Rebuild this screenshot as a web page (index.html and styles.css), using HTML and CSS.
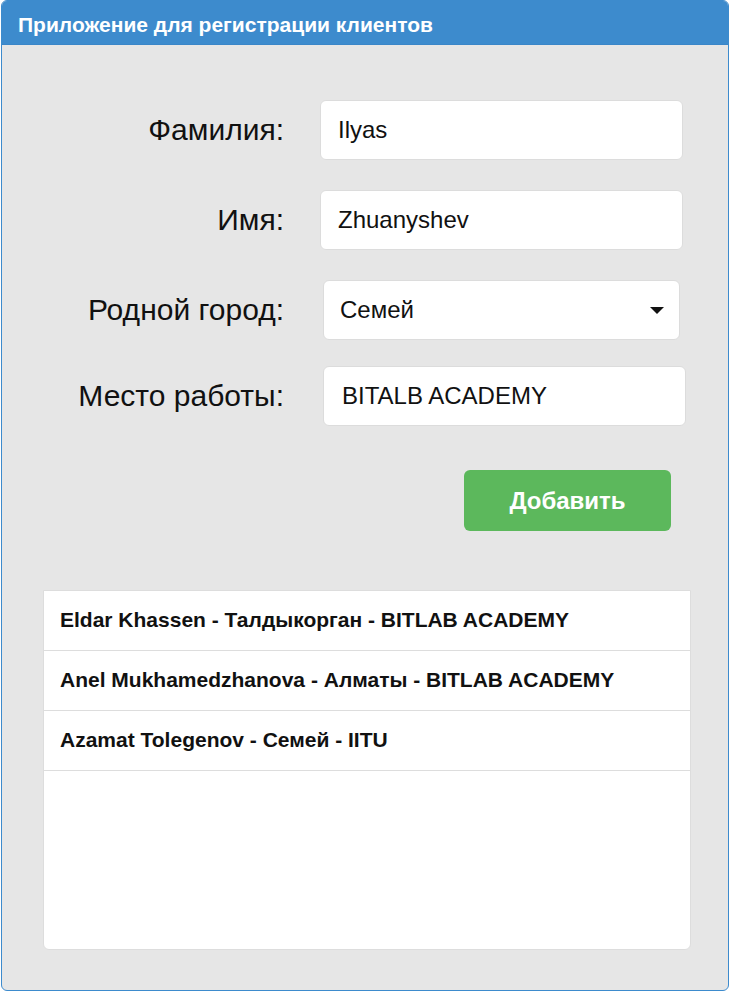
FILE: index.html
```html
<!DOCTYPE html>
<html lang="ru">
<head>
<meta charset="utf-8">
<title>Приложение для регистрации клиентов</title>
<link rel="stylesheet" href="styles.css">
</head>
<body>
<div class="panel">
  <div class="panel-head">Приложение для регистрации клиентов</div>
  <div class="panel-body">
    <form class="form">
      <div class="row row-1">
        <label class="label">Фамилия:</label>
        <div class="field field-a">Ilyas</div>
      </div>
      <div class="row row-2">
        <label class="label">Имя:</label>
        <div class="field field-a">Zhuanyshev</div>
      </div>
      <div class="row row-3">
        <label class="label">Родной город:</label>
        <div class="field field-select">Семей<span class="caret"></span></div>
      </div>
      <div class="row row-4">
        <label class="label">Место работы:</label>
        <div class="field field-b">BITALB ACADEMY</div>
      </div>
      <div class="actions">
        <button type="button" class="btn">Добавить</button>
      </div>
    </form>
    <ul class="list">
      <li class="item">Eldar Khassen - Талдыкорган - BITLAB ACADEMY</li>
      <li class="item">Anel Mukhamedzhanova - Алматы - BITLAB ACADEMY</li>
      <li class="item">Azamat Tolegenov - Семей - IITU</li>
    </ul>
  </div>
</div>
</body>
</html>
```
FILE: styles.css
```css
* { box-sizing: border-box; }
html, body { margin: 0; padding: 0; background: #fff; }
body { font-family: "Liberation Sans", Arial, sans-serif; color: #111; }

.panel {
  margin: 0 2px 0 1px;
  height: 991px;
  border: 1px solid #3d8bcd;
  border-radius: 6px;
  background: #e6e6e6;
  overflow: hidden;
  display: flex;
  flex-direction: column;
}
.panel-head {
  height: 44px;
  background: #3d8bcd;
  color: #fff;
  font-weight: bold;
  font-size: 21px;
  line-height: 24px;
  padding: 12px 0 0 16px;
  border-bottom: 1px solid #3a86c8;
}
.panel-body {
  padding: 0 38px 0 41px;
}
.form { padding-top: 55px; }
.row {
  display: flex;
  align-items: center;
}
.label {
  width: 241px;
  text-align: right;
  font-size: 30px;
  color: #111;
}
.field {
  height: 60px;
  background: #fff;
  border: 1px solid #dcdcdc;
  border-radius: 6px;
  font-size: 24px;
  color: #111;
  display: flex;
  align-items: center;
  padding-left: 17px;
}
.field-a { margin-left: 36px; width: 363px; }
.row-2 { margin-top: 30px; }
.row-3 { margin-top: 30px; }
.row-4 { margin-top: 26px; }
.field-select {
  margin-left: 39px;
  width: 357px;
  padding-left: 16px;
  padding-right: 15px;
  justify-content: space-between;
}
.caret {
  width: 0; height: 0;
  border-left: 7px solid transparent;
  border-right: 7px solid transparent;
  border-top: 7px solid #111;
}
.field-b { margin-left: 39px; width: 363px; padding-left: 18px; }

.actions {
  display: flex;
  justify-content: flex-end;
  padding-right: 19px;
  margin-top: 44px;
}
.btn {
  width: 207px;
  height: 61px;
  background: #5cb85c;
  border: none;
  border-radius: 6px;
  color: #fff;
  font-family: "Liberation Sans", Arial, sans-serif;
  font-weight: bold;
  font-size: 24px;
}

.list {
  list-style: none;
  margin: 59px 0 0 0;
  padding: 0;
  width: 648px;
  height: 360px;
  background: #fff;
  border: 1px solid #dddddd;
  border-radius: 0 0 6px 6px;
}
.item {
  height: 60px;
  border-bottom: 1px solid #dddddd;
  font-weight: bold;
  font-size: 21px;
  display: flex;
  align-items: center;
  padding: 0 0 2px 16px;
  color: #111;
}
```
